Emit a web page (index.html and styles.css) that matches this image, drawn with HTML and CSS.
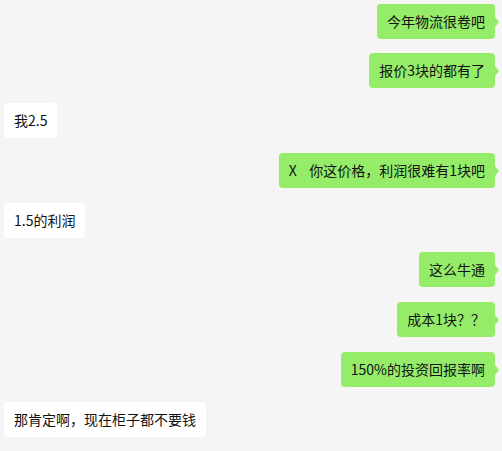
FILE: index.html
```html
<!DOCTYPE html>
<html lang="zh-CN">
<head>
  <meta charset="UTF-8" />
  <meta name="viewport" content="width=device-width, initial-scale=1.0"/>
  <title>聊天</title>
  <link rel="stylesheet" href="styles.css">
</head>
<body>
  <div class="chat">
    <div class="row me"><div class="bubble">今年物流很卷吧</div></div>
    <div class="row me"><div class="bubble">报价3块的都有了</div></div>
    <div class="row other"><div class="bubble">我2.5</div></div>
    <div class="row me"><div class="bubble">X    你这价格，利润很难有1块吧</div></div>
    <div class="row other"><div class="bubble">1.5的利润</div></div>
    <div class="row me"><div class="bubble">这么牛通</div></div>
    <div class="row me"><div class="bubble">成本1块？？</div></div>
    <div class="row me"><div class="bubble">150%的投资回报率啊</div></div>
    <div class="row other"><div class="bubble">那肯定啊，现在柜子都不要钱</div></div>
  </div>
</body>
</html>
```

FILE: styles.css
```css
body {
  margin: 0;
  background: #f5f5f5;
  font-family: "Noto Sans CJK SC", "Microsoft YaHei", sans-serif;
  font-size: 14px;
  color: #111;
}

.chat {
  display: flex;
  flex-direction: column;
  gap: 14.75px;
  padding: 3.5px 7px 0 4px;
}

.row {
  display: flex;
}

.row.me {
  justify-content: flex-end;
}

.bubble {
  position: relative;
  height: 35px;
  line-height: 35px;
  padding: 0 10px;
  border-radius: 4px;
  background: #fff;
  white-space: pre;
}

.me .bubble {
  background: #95ec69;
}

/* little arrow on my bubbles */
.me .bubble::after {
  content: "";
  position: absolute;
  right: -4px;
  top: 13px;
  border-top: 5px solid transparent;
  border-bottom: 5px solid transparent;
  border-left: 4px solid #95ec69;
}
```
